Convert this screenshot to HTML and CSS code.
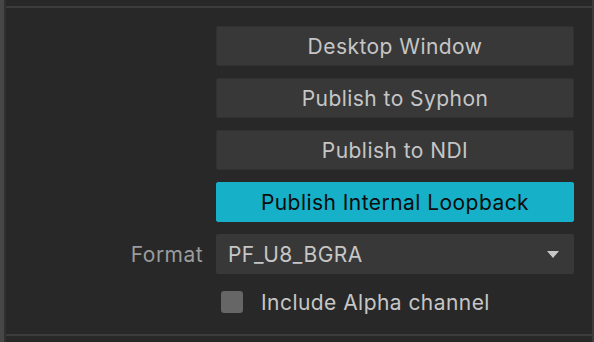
FILE: index.html
```html
<!DOCTYPE html>
<html lang="en">
<head>
    <meta charset="UTF-8">
    <title>Output</title>
    <link rel="stylesheet" href="styles.css">
</head>
<body>
    <div class="frame">
        <div class="edge"></div>
        <div class="panel">
            <div class="rows">
                <div class="label"></div>
                <button class="btn">Desktop Window</button>

                <div class="label"></div>
                <button class="btn">Publish to Syphon</button>

                <div class="label"></div>
                <button class="btn">Publish to NDI</button>

                <div class="label"></div>
                <button class="btn btn-on">Publish Internal Loopback</button>

                <div class="label">Format</div>
                <div class="select">
                    <span>PF_U8_BGRA</span>
                    <span class="arrow"></span>
                </div>

                <div class="label"></div>
                <label class="check">
                    <span class="box"></span>
                    <span>Include Alpha channel</span>
                </label>
            </div>
        </div>
    </div>
</body>
</html>
```

FILE: styles.css
```css
html, body {
    margin: 0;
    height: 100%;
    background: #282828;
    font-family: Inter, "Noto Sans", sans-serif;
    color: #c6c6c6;
}

.frame {
    display: flex;
    height: 342px;
    border-right: 2px solid #3b3b3b;
    box-sizing: border-box;
}

.edge {
    width: 4px;
    background: #474747;
    border-right: 2px solid #303030;
}

.panel {
    flex: 1;
    margin-top: 6px;
    height: 330px;
    box-sizing: border-box;
    border-top: 2px solid #3c3c3c;
    border-bottom: 2px solid #3c3c3c;
}

.rows {
    display: grid;
    grid-template-columns: 210px 358px;
    grid-auto-rows: 40px;
    row-gap: 12px;
    padding-top: 18px;
    font-size: 21px;
    letter-spacing: 0.45px;
}

.label {
    display: flex;
    align-items: center;
    justify-content: flex-end;
    padding-right: 13px;
    color: #9c9c9c;
}

.btn {
    margin: 0;
    padding: 0;
    border: 1px solid #313131;
    border-radius: 2px;
    background: #383838;
    color: #c6c6c6;
    font-family: inherit;
    font-size: inherit;
    letter-spacing: inherit;
}

.btn-on {
    background: #17b0c9;
    border-color: #17b0c9;
    color: #0c0c0c;
}

.select {
    display: flex;
    align-items: center;
    justify-content: space-between;
    padding: 0 15px 0 12px;
    background: #383838;
    border-radius: 2px;
}

.arrow {
    width: 0;
    height: 0;
    border-left: 6.5px solid transparent;
    border-right: 6.5px solid transparent;
    border-top: 7px solid #c8c8c8;
}

.check {
    display: flex;
    align-items: center;
    gap: 18px;
    padding-left: 5px;
    height: 32px;
}

.box {
    width: 22px;
    height: 22px;
    border-radius: 3px;
    background: #666666;
}
```
